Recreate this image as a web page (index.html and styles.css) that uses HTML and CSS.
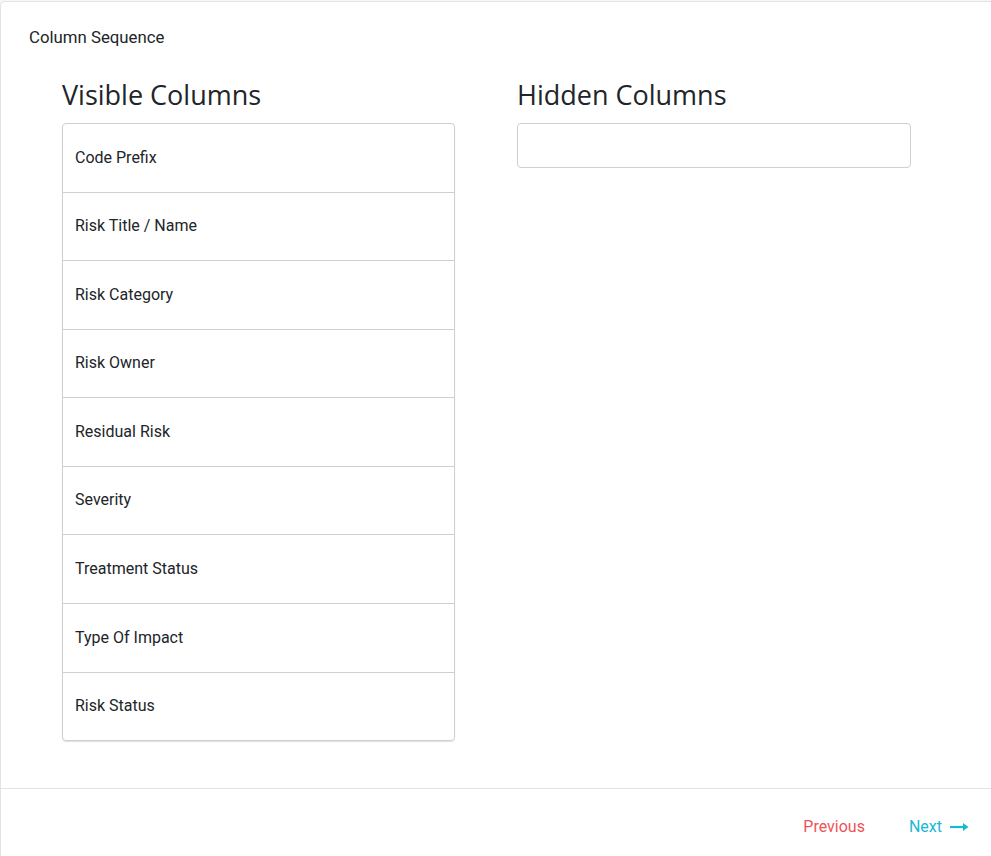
FILE: index.html
```html
<!DOCTYPE html>
<html lang="en">
<head>
<meta charset="utf-8">
<title>Column Sequence</title>
<link rel="stylesheet" href="styles.css">
</head>
<body>
<div class="card">
  <div class="card-body">
    <div class="card-title">Column Sequence</div>
    <div class="columns">
      <section class="column">
        <h2 class="column-heading">Visible Columns</h2>
        <ul class="column-list">
          <li class="column-item">Code Prefix</li>
          <li class="column-item">Risk Title / Name</li>
          <li class="column-item">Risk Category</li>
          <li class="column-item">Risk Owner</li>
          <li class="column-item">Residual Risk</li>
          <li class="column-item">Severity</li>
          <li class="column-item">Treatment Status</li>
          <li class="column-item">Type Of Impact</li>
          <li class="column-item">Risk Status</li>
        </ul>
      </section>
      <section class="column">
        <h2 class="column-heading">Hidden Columns</h2>
        <ul class="column-list column-list--empty"></ul>
      </section>
    </div>
  </div>
  <div class="card-footer">
    <button class="btn btn-prev" type="button">Previous</button>
    <button class="btn btn-next" type="button">Next
      <svg class="arrow" width="19" height="10" viewBox="0 0 19 10" aria-hidden="true">
        <path d="M0 5H15" stroke="currentColor" stroke-width="2.2" fill="none"/>
        <path d="M13 1L18.5 5L13 9Z" fill="currentColor"/>
      </svg>
    </button>
  </div>
</div>
</body>
</html>
```

FILE: styles.css
```css
html, body {
  margin: 0;
  padding: 0;
}

body {
  background: #f6f6f6;
  font-family: Roboto, "Liberation Sans", Arial, sans-serif;
  color: #212529;
  overflow: hidden;
}

.card {
  margin-top: 1px;
  width: calc(100% + 20px);
  min-height: 900px;
  background: #fff;
  border: 1px solid #e3e3e3;
  border-radius: 5px;
  box-sizing: border-box;
}

.card-body {
  padding: 25px 28px 47px;
}

.card-title {
  font-size: 16.8px;
  line-height: 20px;
}

.columns {
  display: grid;
  grid-template-columns: 393px 394px;
  column-gap: 62px;
  padding-left: 33px;
  margin-top: 30px;
}

.column-heading {
  margin: 0 0 10px;
  font-family: "Open Sans", "DejaVu Sans", sans-serif;
  font-weight: 400;
  font-size: 27px;
  line-height: 36px;
  color: #212529;
}

.column-list {
  list-style: none;
  margin: 0;
  padding: 0;
  border: 1px solid #cfcfcf;
  border-radius: 4px;
  box-shadow: 0 1px 1px rgba(0, 0, 0, 0.12);
}

.column-list--empty {
  height: 43px;
  box-shadow: none;
}

.column-item {
  padding: 23.6px 12px 24.4px;
  font-size: 16px;
  line-height: 19.6px;
  border-bottom: 1px solid #cfcfcf;
}

.column-item:last-child {
  border-bottom: none;
}

.card-footer {
  border-top: 1px solid #e3e3e3;
  display: flex;
  justify-content: flex-end;
  gap: 44px;
  padding: 28px 41px 0 0;
}

.btn {
  background: none;
  border: none;
  padding: 0;
  font-family: Roboto, "Liberation Sans", Arial, sans-serif;
  font-size: 16px;
  line-height: 20px;
  cursor: pointer;
  display: inline-flex;
  align-items: center;
}

.btn-prev {
  color: #f0525a;
}

.btn-next {
  color: #19b9d5;
  gap: 8px;
}

.arrow {
  display: block;
}
```
